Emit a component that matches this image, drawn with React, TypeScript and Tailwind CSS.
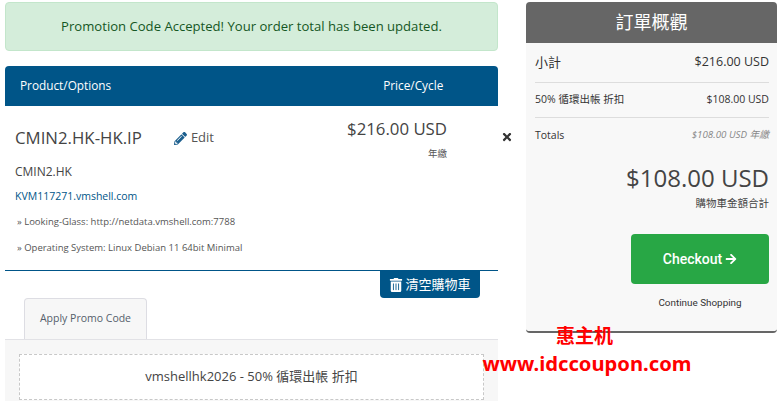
import { FaArrowRight, FaPencilAlt, FaTimes, FaTrashAlt } from 'react-icons/fa'

const font = "font-['Open_Sans','Noto_Sans_CJK_TC',sans-serif]"

function SummaryRow({ label, value, className, border = true }: {
  label: string; value: string; className: string; border?: boolean
}) {
  return (
    <div className={`flex items-center justify-between ${className} ${border ? 'border-b border-[#dddddd]' : ''}`}>
      <span>{label}</span>
      <span>{value}</span>
    </div>
  )
}

export default function App() {
  return (
    <div className={`relative flex h-[401px] w-[777px] overflow-hidden bg-white text-[#333333] ${font}`}>
      <main className="ml-[5px] mt-[2px] w-[493px] shrink-0">
        <div className="flex h-[49px] items-center justify-center rounded border border-[#c3e6cb] bg-[#d4edda] text-[13.1px] text-[#155724]">
          Promotion Code Accepted! Your order total has been updated.
        </div>

        <div className="mt-[15px] flex h-[40px] items-center rounded-t bg-[#005588] text-[11.8px] text-white">
          <span className="ml-[15px]">Product/Options</span>
          <span className="ml-[272px]">Price/Cycle</span>
        </div>

        <div className="flex h-[165px] border-b border-[#005588]">
          <div className="ml-[10px] w-[320px] shrink-0 pt-[20px]">
            <div className="flex h-[24px] items-center text-[16.8px] text-[#444444]">
              <span>CMIN2.HK-HK.IP</span>
              <span className="ml-[32px] flex items-center gap-[4px] text-[13px] text-[#555555]">
                <FaPencilAlt className="size-[13px] text-[#1c5f8e]" />
                Edit
              </span>
            </div>
            <p className="mt-[12px] h-[20px] text-[12px] leading-[20px] text-[#444444]">CMIN2.HK</p>
            <p className="mt-[4px] h-[20px] text-[10.5px] leading-[20px] text-[#005588]">KVM117271.vmshell.com</p>
            <p className="ml-[2px] mt-[6px] h-[20px] text-[9.5px] leading-[20px] text-[#555555]">» Looking-Glass: http://netdata.vmshell.com:7788</p>
            <p className="ml-[2px] mt-[6px] h-[20px] text-[9.5px] leading-[20px] text-[#555555]">» Operating System: Linux Debian 11 64bit Minimal</p>
          </div>
          <div className="w-[112px] shrink-0 pt-[12px] text-right">
            <p className="text-[16.8px] leading-[22px] text-[#444444]">$216.00 USD</p>
            <p className="mt-[7px] text-[9.5px] leading-[14px] text-[#555555]">年繳</p>
          </div>
          <FaTimes className="ml-[54px] mt-[25px] size-[12px] shrink-0 text-[#333333]" />
        </div>

        <div className="flex justify-end pr-[18px]">
          <button className="flex h-[27px] w-[100px] items-center justify-center gap-[2px] rounded-b bg-[#005588] text-[13px] text-white">
            <FaTrashAlt className="size-[14px]" />
            清空購物車
          </button>
        </div>

        <div className="ml-[19px] flex h-[41px] w-[123px] items-center justify-center rounded-t border border-b-0 border-[#dddde3] bg-[#f7f7f7] text-[10.5px] text-[#555e6b]">
          Apply Promo Code
        </div>
        <div className="h-[62px] border-t border-[#e2e2e6] bg-[#f7f7f7] pl-[14px] pt-[14px]">
          <div className="flex h-[46px] w-[465px] items-center justify-center border border-dashed border-[#c8c8c8] bg-white text-[13px] text-[#444444]">
            vmshellhk2026 - 50% 循環出帳 折扣
          </div>
        </div>
      </main>

      <aside className="ml-[28px] mt-[2px] h-[331px] w-[251px] shrink-0 rounded-[4px] border-b-2 border-[#666666] bg-[#f8f8f8]">
        <div className="flex h-[41px] items-center justify-center rounded-t-[4px] bg-[#666666] text-[18px] text-white">訂單概觀</div>
        <div className="pl-[9px] pr-[8px]">
          <SummaryRow label="小計" value="$216.00 USD" className="h-[40px] text-[12.5px] [&>span:first-child]:text-[13px]" />
          <SummaryRow label="50% 循環出帳 折扣" value="$108.00 USD" className="h-[35px] text-[10.5px]" />
          <SummaryRow label="Totals" value="$108.00 USD 年繳" className="h-[35px] text-[10.5px] [&>span:last-child]:text-[9.75px] [&>span:last-child]:italic [&>span:last-child]:text-[#888888]" border={false} />
          <p className="mt-[9px] text-right text-[24px] leading-[32px] text-[#444444]">$108.00 USD</p>
          <p className="mt-[2px] text-right text-[10.5px] leading-[14px] text-[#444444]">購物車金額合計</p>
          <div className="ml-[96px] mt-[24px]">
            <button className="flex h-[50px] w-[138px] items-center justify-center gap-[3px] rounded bg-[#28a745] font-['Roboto',sans-serif] text-[14px] font-medium text-white">
              Checkout
              <FaArrowRight className="size-[12px]" />
            </button>
            <p className="mt-[12px] text-center font-['Roboto',sans-serif] text-[9.9px] text-[#333333]">Continue Shopping</p>
          </div>
        </div>
      </aside>

      {/* watermark over the page */}
      <div className="pointer-events-none absolute left-[482px] top-[323px] w-[210px] text-center font-['Noto_Sans','Noto_Sans_CJK_SC',sans-serif] font-bold text-[#ff0000]">
        <p className="pr-[5px] text-[19px] leading-[27px]">惠主机</p>
        <p className="whitespace-nowrap text-[20.2px] leading-[26px]">www.idccoupon.com</p>
      </div>
    </div>
  )
}
